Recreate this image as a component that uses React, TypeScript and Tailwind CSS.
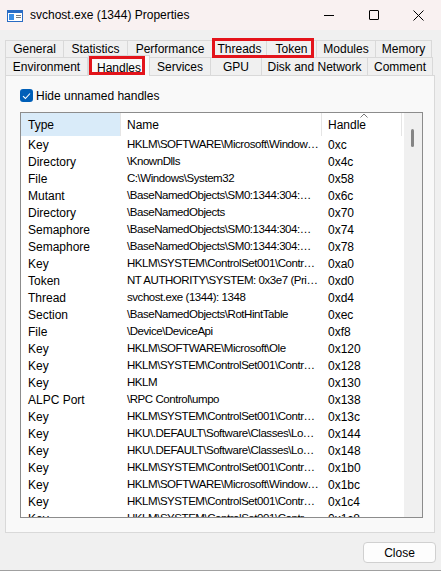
import React from 'react';

const rows: [string, string, string][] = [
  ['Key', 'HKLM\\SOFTWARE\\Microsoft\\Window…', '0xc'],
  ['Directory', '\\KnownDlls', '0x4c'],
  ['File', 'C:\\Windows\\System32', '0x58'],
  ['Mutant', '\\BaseNamedObjects\\SM0:1344:304:…', '0x6c'],
  ['Directory', '\\BaseNamedObjects', '0x70'],
  ['Semaphore', '\\BaseNamedObjects\\SM0:1344:304:…', '0x74'],
  ['Semaphore', '\\BaseNamedObjects\\SM0:1344:304:…', '0x78'],
  ['Key', 'HKLM\\SYSTEM\\ControlSet001\\Contr…', '0xa0'],
  ['Token', 'NT AUTHORITY\\SYSTEM: 0x3e7 (Pri…', '0xd0'],
  ['Thread', 'svchost.exe (1344): 1348', '0xd4'],
  ['Section', '\\BaseNamedObjects\\RotHintTable', '0xec'],
  ['File', '\\Device\\DeviceApi', '0xf8'],
  ['Key', 'HKLM\\SOFTWARE\\Microsoft\\Ole', '0x120'],
  ['Key', 'HKLM\\SYSTEM\\ControlSet001\\Contr…', '0x128'],
  ['Key', 'HKLM', '0x130'],
  ['ALPC Port', '\\RPC Control\\umpo', '0x138'],
  ['Key', 'HKLM\\SYSTEM\\ControlSet001\\Contr…', '0x13c'],
  ['Key', 'HKU\\.DEFAULT\\Software\\Classes\\Lo…', '0x144'],
  ['Key', 'HKU\\.DEFAULT\\Software\\Classes\\Lo…', '0x148'],
  ['Key', 'HKLM\\SYSTEM\\ControlSet001\\Contr…', '0x1b0'],
  ['Key', 'HKLM\\SOFTWARE\\Microsoft\\Window…', '0x1bc'],
  ['Key', 'HKLM\\SYSTEM\\ControlSet001\\Contr…', '0x1c4'],
  ['Key', 'HKLM\\SYSTEM\\ControlSet001\\Contr…', '0x1c8'],
];

const topTabs = [
  { label: 'General', w: 'w-[59px]' },
  { label: 'Statistics', w: 'w-[64px]' },
  { label: 'Performance', w: 'w-[85px]' },
  { label: 'Threads', w: 'w-[54px]' },
  { label: 'Token', w: 'w-[50px]' },
  { label: 'Modules', w: 'w-[59px]' },
  { label: 'Memory', w: 'w-[56px]' },
];

const bottomTabs = [
  { label: 'Environment', w: 'w-[83px]' },
  { label: 'Handles', w: 'w-[62px]', active: true },
  { label: 'Services', w: 'w-[61px]' },
  { label: 'GPU', w: 'w-[51px]' },
  { label: 'Disk and Network', w: 'w-[106px]' },
  { label: 'Comment', w: 'w-[65px]' },
];

const WindowIcon = () => (
  <svg width="16" height="12" viewBox="0 0 16 12">
    <rect x="0.5" y="0.5" width="15" height="11" fill="#fff" stroke="#2a6cc4" />
    <rect x="1" y="1" width="14" height="2" fill="#2a6cc4" />
    <rect x="2" y="4" width="5" height="6" fill="#3b8ee6" />
    <rect x="9" y="5" width="5" height="1" fill="#7a7a7a" />
    <rect x="9" y="7" width="5" height="1" fill="#7a7a7a" />
  </svg>
);

export default function App() {
  return (
    <div className="relative w-[441px] h-[571px] overflow-hidden bg-[#f0f0f0] font-['Liberation_Sans',Arial,sans-serif] text-[12px] text-black flex flex-col border-b border-[#a0a0a0]">
      {/* Title bar */}
      <div className="h-[30px] bg-[#f9f1f1] flex items-center shrink-0">
        <div className="ml-[7px] mt-[1px] flex">
          <WindowIcon />
        </div>
        <span className="ml-[7px]">svchost.exe (1344) Properties</span>
        <div className="ml-auto flex h-full">
          <div className="w-[45px] flex items-center justify-center">
            <div className="w-[10px] h-px bg-black" />
          </div>
          <div className="w-[45px] flex items-center justify-center">
            <div className="w-[10px] h-[10px] border border-black rounded-[1px]" />
          </div>
          <div className="w-[45px] flex items-center justify-center">
            <svg width="11" height="11" viewBox="0 0 11 11">
              <path d="M0.5 0.5 L10.5 10.5 M10.5 0.5 L0.5 10.5" stroke="#000" strokeWidth="1" />
            </svg>
          </div>
        </div>
      </div>

      {/* Tabs */}
      <div className="mt-[10px] pl-[5px] flex flex-col shrink-0">
        <div className="flex h-[17px]">
          {topTabs.map((t, i) => (
            <div
              key={t.label}
              className={`${t.w} flex items-center justify-center border-t border-r border-[#d9d9d9] ${i === 0 ? 'border-l' : ''}`}
            >
              {t.label}
            </div>
          ))}
        </div>
        <div className="relative z-10 flex h-[18px]">
          {bottomTabs.map((t, i) =>
            t.active ? (
              <div
                key={t.label}
                className={`${t.w} -mt-[2px] h-[21px] flex items-start justify-center pt-[3px] bg-[#f9f9f9] border-t border-l border-r border-[#d9d9d9]`}
              >
                {t.label}
              </div>
            ) : (
              <div
                key={t.label}
                className={`${t.w} flex items-center justify-center border-t border-r border-[#d9d9d9] ${i === 0 ? 'border-l' : ''}`}
              >
                {t.label}
              </div>
            )
          )}
        </div>
      </div>

      {/* Panel */}
      <div className="relative ml-[5px] w-[430px] h-[458px] shrink-0 border border-[#d9d9d9] bg-[#f9f9f9] pl-[14px] pt-[13px] flex flex-col">
        <label className="flex items-center h-[13px]">
          <span className="w-[13px] h-[13px] rounded-[3px] bg-[#005fb8] flex items-center justify-center">
            <svg width="9" height="8" viewBox="0 0 9 8">
              <path d="M1 4.2 L3.4 6.5 L8 1.5" fill="none" stroke="#fff" strokeWidth="1.1" />
            </svg>
          </span>
          <span className="ml-[3px]">Hide unnamed handles</span>
        </label>

        <div className="mt-[10px] w-[403px] h-[406px] border border-[#8c8c8c] bg-white flex overflow-hidden">
          <div className="flex-1 flex flex-col overflow-hidden">
            <div className="h-[23px] flex shrink-0">
              <div className="w-[100px] pl-[7px] flex items-center bg-[#d9ebf9] border-r border-[#e5e5e5]">Type</div>
              <div className="w-[201px] pl-[6px] flex items-center border-r border-[#e5e5e5]">Name</div>
              <div className="relative w-[80px] pl-[6px] flex items-center border-r border-[#e5e5e5]">
                Handle
                <svg className="absolute left-[38px] top-0" width="8" height="5" viewBox="0 0 8 5">
                  <path d="M0.5 4.5 L4 1 L7.5 4.5" fill="none" stroke="#777" strokeWidth="1" />
                </svg>
              </div>
            </div>
            {rows.map((r, i) => (
              <div key={i} className="h-[17px] flex items-center shrink-0">
                <div className="w-[100px] shrink-0 pl-[7px] whitespace-nowrap overflow-hidden">{r[0]}</div>
                <div className="w-[201px] shrink-0 pl-[6px] whitespace-nowrap overflow-hidden text-[11.5px] tracking-[-0.45px]">{r[1]}</div>
                <div className="w-[80px] shrink-0 pl-[6px] whitespace-nowrap overflow-hidden">{r[2]}</div>
              </div>
            ))}
          </div>
          <div className="w-[18px] bg-[#f0f0f0] shrink-0">
            <div className="mt-[16px] ml-[7px] w-[3px] h-[18px] rounded-full bg-[#858585]" />
          </div>
        </div>
      </div>

      {/* Footer */}
      <div className="mt-[9px] flex justify-end pr-[5px]">
        <button className="w-[73px] h-[21px] border border-[#d0d0d0] rounded-[4px] bg-[#fdfdfd] flex items-center justify-center">
          Close
        </button>
      </div>

      {/* Annotation boxes */}
      <div className="absolute left-[212px] top-[38px] w-[102px] h-[20px] border-[3px] border-[#e3141b] z-20 pointer-events-none" />
      <div className="absolute left-[89px] top-[56px] w-[56px] h-[19px] border-[3px] border-[#e3141b] z-20 pointer-events-none" />
    </div>
  );
}
